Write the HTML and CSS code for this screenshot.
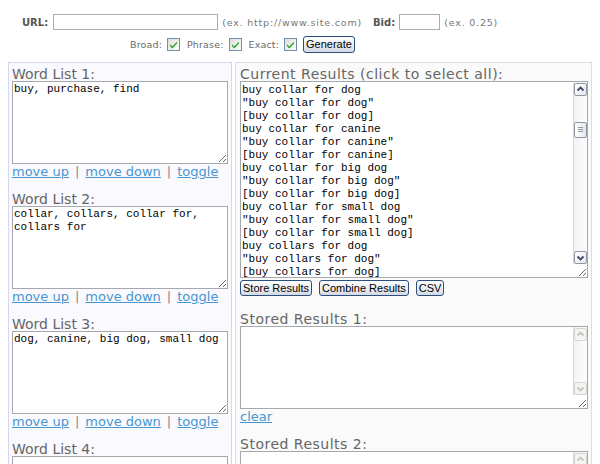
FILE: index.html
```html
<!DOCTYPE html>
<html>
<head>
<meta charset="utf-8">
<title>Keyword Generator</title>
<link rel="stylesheet" href="styles.css">
</head>
<body>
<div class="header">
  <div class="row row1">
    <label class="lbl">URL:</label>
    <input class="field url" type="text">
    <span class="ex ex-url">(ex. http://www.site.com)</span>
    <label class="lbl bid">Bid:</label>
    <input class="field bidin" type="text">
    <span class="ex">(ex. 0.25)</span>
  </div>
  <div class="row row2">
    <span class="opt">Broad:</span>
    <span class="cb"><svg width="13" height="13" viewBox="0 0 13 13"><defs><linearGradient id="g1" x1="0" y1="0" x2="1" y2="1"><stop offset="0" stop-color="#dcdcd7"/><stop offset="1" stop-color="#ffffff"/></linearGradient></defs><rect x="0.5" y="0.5" width="12" height="12" fill="url(#g1)" stroke="#6f8fb0"/><path d="M3 6.2 L5.2 8.6 L10 3.8 L10 5.6 L5.2 10.4 L3 8 Z" fill="#21a121"/></svg></span>
    <span class="opt">Phrase:</span>
    <span class="cb"><svg width="13" height="13" viewBox="0 0 13 13"><rect x="0.5" y="0.5" width="12" height="12" fill="url(#g1)" stroke="#6f8fb0"/><path d="M3 6.2 L5.2 8.6 L10 3.8 L10 5.6 L5.2 10.4 L3 8 Z" fill="#21a121"/></svg></span>
    <span class="opt">Exact:</span>
    <span class="cb"><svg width="13" height="13" viewBox="0 0 13 13"><rect x="0.5" y="0.5" width="12" height="12" fill="url(#g1)" stroke="#6f8fb0"/><path d="M3 6.2 L5.2 8.6 L10 3.8 L10 5.6 L5.2 10.4 L3 8 Z" fill="#21a121"/></svg></span>
    <button class="btn gen">Generate</button>
  </div>
</div>

<div class="main">
  <div class="panel left">
    <div class="block">
      <div class="label">Word List 1:</div>
      <textarea class="ta wl">buy, purchase, find</textarea>
      <div class="links"><a href="#">move up</a><span class="sep">|</span><a href="#">move down</a><span class="sep">|</span><a href="#">toggle</a></div>
    </div>
    <div class="block">
      <div class="label">Word List 2:</div>
      <textarea class="ta wl">collar, collars, collar for, collars for</textarea>
      <div class="links"><a href="#">move up</a><span class="sep">|</span><a href="#">move down</a><span class="sep">|</span><a href="#">toggle</a></div>
    </div>
    <div class="block">
      <div class="label">Word List 3:</div>
      <textarea class="ta wl">dog, canine, big dog, small dog</textarea>
      <div class="links"><a href="#">move up</a><span class="sep">|</span><a href="#">move down</a><span class="sep">|</span><a href="#">toggle</a></div>
    </div>
    <div class="block">
      <div class="label">Word List 4:</div>
      <textarea class="ta wl"></textarea>
      <div class="links"><a href="#">move up</a><span class="sep">|</span><a href="#">move down</a><span class="sep">|</span><a href="#">toggle</a></div>
    </div>
  </div>

  <div class="panel right">
    <div class="label rlabel">Current Results (click to select all):</div>
    <div class="ta-wrap">
      <textarea class="ta results" readonly>buy collar for dog
"buy collar for dog"
[buy collar for dog]
buy collar for canine
"buy collar for canine"
[buy collar for canine]
buy collar for big dog
"buy collar for big dog"
[buy collar for big dog]
buy collar for small dog
"buy collar for small dog"
[buy collar for small dog]
buy collars for dog
"buy collars for dog"
[buy collars for dog]
buy collars for canine
"buy collars for canine"
[buy collars for canine]</textarea>
      <div class="sbar">
        <span class="sbtn"><svg width="11" height="11" viewBox="0 0 11 11"><path d="M2.5 6.5 L5.5 3.5 L8.5 6.5" fill="none" stroke="#3c4a66" stroke-width="1.8"/></svg></span>
        <span class="strack">
          <span class="thumb"><svg width="11" height="14" viewBox="0 0 11 14"><path d="M3 4.5 H8 M3 6.5 H8 M3 8.5 H8" stroke="#8a97ae" stroke-width="1"/></svg></span>
        </span>
        <span class="sbtn"><svg width="11" height="11" viewBox="0 0 11 11"><path d="M2.5 4.5 L5.5 7.5 L8.5 4.5" fill="none" stroke="#3c4a66" stroke-width="1.8"/></svg></span>
      </div>
    </div>
    <div class="btnrow">
      <button class="btn">Store Results</button>
      <button class="btn">Combine Results</button>
      <button class="btn">CSV</button>
    </div>

    <div class="block stored">
      <div class="label rlabel">Stored Results 1:</div>
      <div class="ta-wrap">
        <textarea class="ta st"></textarea>
        <div class="sbar off">
          <span class="sbtn"><svg width="11" height="11" viewBox="0 0 11 11"><path d="M2.5 6.5 L5.5 3.5 L8.5 6.5" fill="none" stroke="#c4c6c0" stroke-width="1.8"/></svg></span>
          <span class="strack"></span>
          <span class="sbtn"><svg width="11" height="11" viewBox="0 0 11 11"><path d="M2.5 4.5 L5.5 7.5 L8.5 4.5" fill="none" stroke="#c4c6c0" stroke-width="1.8"/></svg></span>
        </div>
      </div>
      <div class="links"><a href="#">clear</a></div>
    </div>
    <div class="block stored2">
      <div class="label rlabel">Stored Results 2:</div>
      <div class="ta-wrap">
        <textarea class="ta st"></textarea>
        <div class="sbar off">
          <span class="sbtn"><svg width="11" height="11" viewBox="0 0 11 11"><path d="M2.5 6.5 L5.5 3.5 L8.5 6.5" fill="none" stroke="#c4c6c0" stroke-width="1.8"/></svg></span>
          <span class="strack"></span>
          <span class="sbtn"><svg width="11" height="11" viewBox="0 0 11 11"><path d="M2.5 4.5 L5.5 7.5 L8.5 4.5" fill="none" stroke="#c4c6c0" stroke-width="1.8"/></svg></span>
        </div>
      </div>
      <div class="links"><a href="#">clear</a></div>
    </div>
  </div>
</div>
</body>
</html>
```

FILE: styles.css
```css
html, body {
  background: #ffffff;
}
body {
  margin: 8px;
  font-family: "DejaVu Sans", Verdana, sans-serif;
  color: #555555;
}

/* header */
.row {
  display: flex;
  align-items: center;
}
.row1 {
  padding: 6px 0 0 14px;
  height: 16px;
}
.row2 {
  margin-top: 6px;
  padding-left: 122px;
  height: 17px;
}
.lbl {
  font-size: 10px;
  font-weight: bold;
  color: #555555;
  margin-right: 5px;
}
.bid {
  margin-left: 11px;
  margin-right: 4px;
}
.field {
  box-sizing: border-box;
  height: 16px;
  margin: 0;
  padding: 0 2px;
  border: 1px solid #a9acb0;
  background: #ffffff;
  font: 11px "DejaVu Sans", sans-serif;
}
.url {
  width: 165px;
}
.bidin {
  width: 41px;
}
.ex {
  font-size: 9.5px;
  letter-spacing: 0.8px;
  color: #777777;
  margin-left: 4px;
}
.opt {
  font-size: 9.5px;
  letter-spacing: 0.15px;
  color: #6a6a6a;
  margin-right: 5px;
}
.cb {
  display: inline-flex;
  width: 13px;
  height: 13px;
  margin-right: 7px;
}
.cb svg {
  display: block;
}

.btn {
  box-sizing: border-box;
  height: 16px;
  margin: 0;
  padding: 0 2px;
  border: 1px solid #2a4f7f;
  border-radius: 3px;
  background: linear-gradient(#fefefe, #eceef3 55%, #d4d8e2);
  font: 11px/13px "Liberation Sans", Arial, sans-serif;
  color: #000000;
}
.gen {
  margin-left: -1px;
  height: 17px;
}

/* panels */
.main {
  display: flex;
  gap: 3px;
  margin-top: 9px;
  align-items: flex-start;
}
.panel {
  box-sizing: border-box;
  border: 1px solid #d6d6f2;
  padding: 4px 3px 0;
}
.left {
  width: 224px;
  flex: none;
  background: #f9f9fe;
}
.right {
  width: 357px;
  flex: none;
  padding: 4px 3px 0 4px;
  border-color: #dddddd;
  background: #fafafa;
}
.block {
  margin-bottom: 12px;
}
.label {
  font-size: 14px;
  line-height: 14px;
  color: #666666;
  white-space: nowrap;
}
.rlabel {
  letter-spacing: 0.5px;
}
.ta {
  display: block;
  box-sizing: border-box;
  width: 100%;
  margin: 0;
  padding: 1px;
  border: 1px solid #a5a9ad;
  background: #ffffff;
  color: #000000;
  font: 11px/13px "Liberation Mono", "Courier New", monospace;
  overflow: hidden;
}
.wl {
  height: 83px;
}
.results {
  height: 197px;
  padding-top: 2px;
}
.st {
  height: 83px;
}
.ta-wrap {
  position: relative;
}
.sbar {
  position: absolute;
  top: 1px;
  right: 1px;
  bottom: 14px;
  width: 14px;
  box-sizing: border-box;
  border-left: 1px solid #d8d8d8;
  background: linear-gradient(90deg, #f3f3f6, #fdfdfd);
  display: flex;
  flex-direction: column;
  align-items: center;
  padding-top: 1px;
}
.sbtn {
  display: flex;
  align-items: center;
  justify-content: center;
  width: 11px;
  height: 11px;
  border: 1px solid #9097a2;
  border-radius: 2px;
  background: linear-gradient(135deg, #ffffff, #e4e6ea);
}
.sbtn svg {
  display: block;
}
.strack {
  flex: 1;
  width: 100%;
  display: flex;
  flex-direction: column;
  align-items: center;
  padding-top: 26px;
}
.thumb {
  display: flex;
  width: 11px;
  height: 14px;
  border: 1px solid #9097a2;
  border-radius: 2px;
  background: linear-gradient(90deg, #ffffff, #e4e6ea);
}
.off .sbtn {
  border-color: #d4d6d0;
  background: #f4f4f0;
}
.btnrow {
  display: flex;
  gap: 7px;
  margin-top: 2px;
}
.stored {
  margin-top: 16px;
}

.links {
  font-size: 13px;
  line-height: 16px;
  white-space: nowrap;
}
.links a {
  color: #4896cf;
  text-decoration: underline;
}
.sep {
  color: #8a8a8a;
  margin: 0 6px;
}
```
